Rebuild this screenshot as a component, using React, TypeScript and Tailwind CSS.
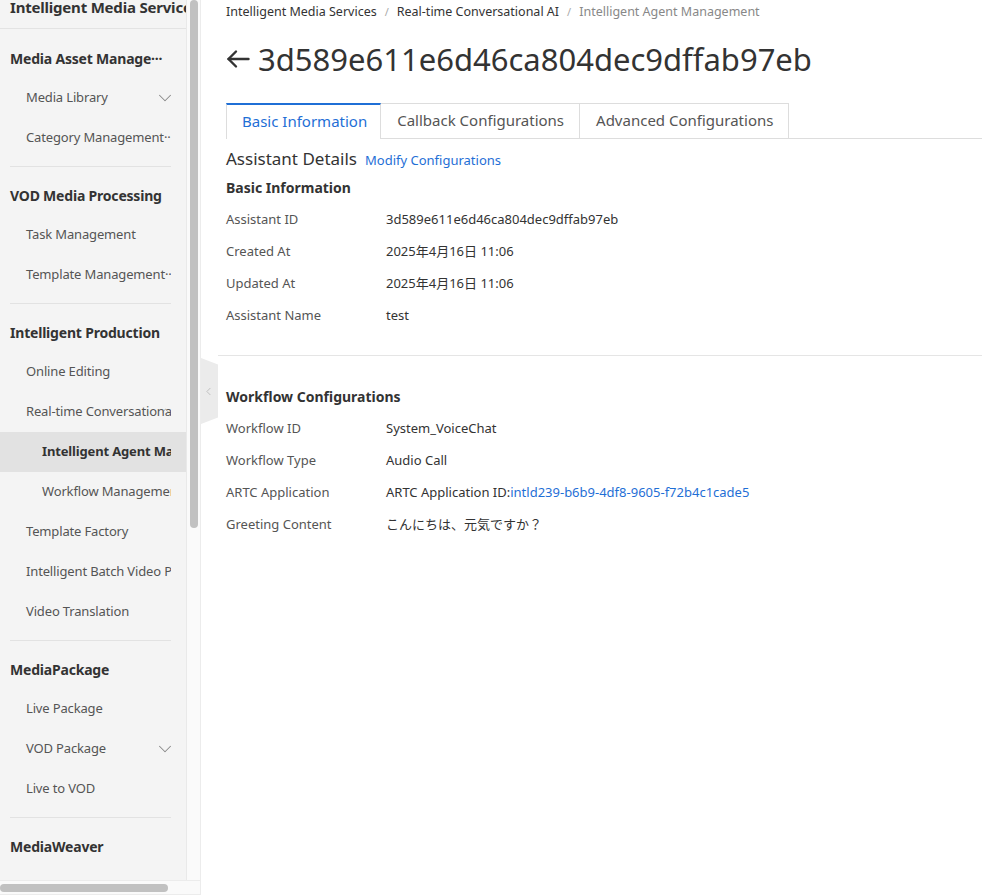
import { ChevronDown, ChevronLeft, ChevronUp } from 'lucide-react'

type NavItem = { label: string; level?: 1 | 2; active?: boolean; icon?: 'down' | 'up' }
type NavGroup = { title: string; items: NavItem[] }

const groups: NavGroup[] = [
  {
    title: 'Media Asset Manage···',
    items: [
      { label: 'Media Library', icon: 'down' },
      { label: 'Category Management··' },
    ],
  },
  {
    title: 'VOD Media Processing',
    items: [{ label: 'Task Management' }, { label: 'Template Management··' }],
  },
  {
    title: 'Intelligent Production',
    items: [
      { label: 'Online Editing' },
      { label: 'Real-time Conversational AI', icon: 'up' },
      { label: 'Intelligent Agent Management', level: 2, active: true },
      { label: 'Workflow Management', level: 2 },
      { label: 'Template Factory' },
      { label: 'Intelligent Batch Video Production' },
      { label: 'Video Translation' },
    ],
  },
  {
    title: 'MediaPackage',
    items: [{ label: 'Live Package' }, { label: 'VOD Package', icon: 'down' }, { label: 'Live to VOD' }],
  },
  { title: 'MediaWeaver', items: [] },
]

const basicRows = [
  ['Assistant ID', '3d589e611e6d46ca804dec9dffab97eb'],
  ['Created At', '2025年4月16日 11:06'],
  ['Updated At', '2025年4月16日 11:06'],
  ['Assistant Name', 'test'],
]

function Sidebar() {
  return (
    <aside className="flex h-[895px] w-[201px] shrink-0 flex-col border-r border-b border-[#ececec] bg-[#fafafa]">
      <div className="flex min-h-0 flex-1">
        {/* scrollable panel */}
        <div className="w-[187px] shrink-0 overflow-hidden border-r border-[#e9e9e9] bg-[#f4f4f4]">
          <div className="h-[29px] overflow-hidden whitespace-nowrap border-b border-[#e3e3e3] pl-[10px] text-[15px] font-bold leading-[15px] tracking-[-0.2px] text-[#333]">
            Intelligent Media Services
          </div>
          <nav className="pt-[9px]">
            {groups.map((group, gi) => (
              <div key={group.title}>
                {gi > 0 && <div className="mx-[10px] my-2 h-px w-[161px] bg-[#e2e2e2]" />}
                <div className="flex h-10 items-center whitespace-nowrap pl-[10px] text-[14px] font-bold tracking-[-0.2px] text-[#333]">
                  {group.title}
                </div>
                {group.items.map((item) => (
                  <div
                    key={item.label}
                    className={
                      'relative flex h-10 items-center ' + (item.active ? 'bg-[#e2e2e2]' : '')
                    }
                  >
                    <div
                      className={
                        'w-[171px] overflow-hidden whitespace-nowrap text-[13px] tracking-[-0.15px] ' +
                        (item.level === 2 ? 'pl-[42px] ' : 'pl-[26px] ') +
                        (item.active ? 'font-bold text-[#333]' : 'text-[#555]')
                      }
                    >
                      {item.label}
                    </div>
                    {item.icon === 'down' && (
                      <ChevronDown className="absolute left-[154px] size-[22px] text-[#888]" strokeWidth={1.1} />
                    )}
                    {item.icon === 'up' && (
                      <ChevronUp className="absolute left-[160px] top-[13px] size-[11px] text-[#777]" strokeWidth={1.3} />
                    )}
                  </div>
                ))}
              </div>
            ))}
          </nav>
        </div>
        {/* vertical scrollbar */}
        <div className="flex-1 pl-[3px] pr-[2px]">
          <div className="h-[528px] w-2 rounded-full bg-[#c1c1c1]" />
        </div>
      </div>
      {/* horizontal scrollbar */}
      <div className="flex h-[14px] items-center border-t border-[#ececec]">
        <div className="h-2 w-[168px] rounded-full bg-[#c1c1c1]" />
      </div>
    </aside>
  )
}

function DetailRows({ rows }: { rows: (string | JSX.Element)[][] }) {
  return (
    <div className="mt-[6px]">
      {rows.map(([label, value], i) => (
        <div key={i} className="flex h-8 items-center text-[13px]">
          <div className="w-[160px] shrink-0 text-[#555]">{label}</div>
          <div className="text-[#333]">{value}</div>
        </div>
      ))}
    </div>
  )
}

export default function App() {
  const workflowRows = [
    ['Workflow ID', 'System_VoiceChat'],
    ['Workflow Type', 'Audio Call'],
    [
      'ARTC Application',
      <span key="artc">
        ARTC Application ID:<span className="text-[#1f6fd6]">intld239-b6b9-4df8-9605-f72b4c1cade5</span>
      </span>,
    ],
    ['Greeting Content', 'こんにちは、元気ですか？'],
  ]

  return (
    <div className="flex h-[895px] w-[982px] overflow-hidden bg-white font-['Noto_Sans','Noto_Sans_CJK_JP',sans-serif]">
      <Sidebar />

      <main className="relative flex-1 pl-[17px]">
        {/* collapse handle */}
        <div className="absolute left-0 top-[358px] flex h-[66px] w-[17px] items-center justify-center bg-[#ebebeb] [clip-path:polygon(0_0,100%_10%,100%_90%,0_100%)]">
          <ChevronLeft className="-ml-[2px] size-[13px] text-[#b5b5b5]" strokeWidth={1.5} />
        </div>

        <div className="pl-2 pt-[2px]">
          {/* breadcrumb */}
          <div className="flex h-5 items-center gap-[8px] text-[12.5px] text-[#333]">
            <span>Intelligent Media Services</span>
            <span className="text-[11px] text-[#aaa]">/</span>
            <span>Real-time Conversational AI</span>
            <span className="text-[11px] text-[#aaa]">/</span>
            <span className="text-[#888]">Intelligent Agent Management</span>
          </div>

          {/* title */}
          <div className="mt-[17px] flex h-10 items-center gap-2">
            <svg width="24" height="20" viewBox="0 0 24 20" fill="none" stroke="#333" strokeWidth="2.4" strokeLinecap="round" strokeLinejoin="round">
              <path d="M22.5 10H2.5" />
              <path d="M10 2.5L2.5 10L10 17.5" />
            </svg>
            <h1 className="text-[31px] font-normal leading-10 text-[#333]">3d589e611e6d46ca804dec9dffab97eb</h1>
          </div>

          {/* tabs */}
          <div className="mt-6 flex h-9 text-[15px]">
            <div className="flex items-center border-x border-t-2 border-[#ddd] border-t-[#1f6fd6] bg-white pb-[2px] pl-[15px] pr-[13px] text-[#1f6fd6]">
              Basic Information
            </div>
            <div className="flex items-center border-r border-t border-b border-[#ddd] pb-[1px] pl-[16px] pr-[15px] text-[#555]">
              Callback Configurations
            </div>
            <div className="flex items-center border-r border-t border-b border-[#ddd] pb-[1px] pl-[16px] pr-[15px] text-[#555]">
              Advanced Configurations
            </div>
            <div className="flex-1 border-b border-[#ddd]" />
          </div>

          <div className="mt-[7px] flex h-6 items-baseline gap-2">
            <span className="text-[17px] text-[#333]">Assistant Details</span>
            <span className="text-[13px] text-[#1f6fd6]">Modify Configurations</span>
          </div>

          <div className="mt-[8px] h-5 text-[14px] font-bold leading-5 text-[#333]">Basic Information</div>
          <DetailRows rows={basicRows} />
        </div>

        <div className="mt-[23px] h-px bg-[#e5e5e5]" />

        <div className="pl-2 pt-[31px]">
          <div className="h-5 text-[14px] font-bold leading-5 text-[#333]">Workflow Configurations</div>
          <DetailRows rows={workflowRows} />
        </div>
      </main>
    </div>
  )
}
